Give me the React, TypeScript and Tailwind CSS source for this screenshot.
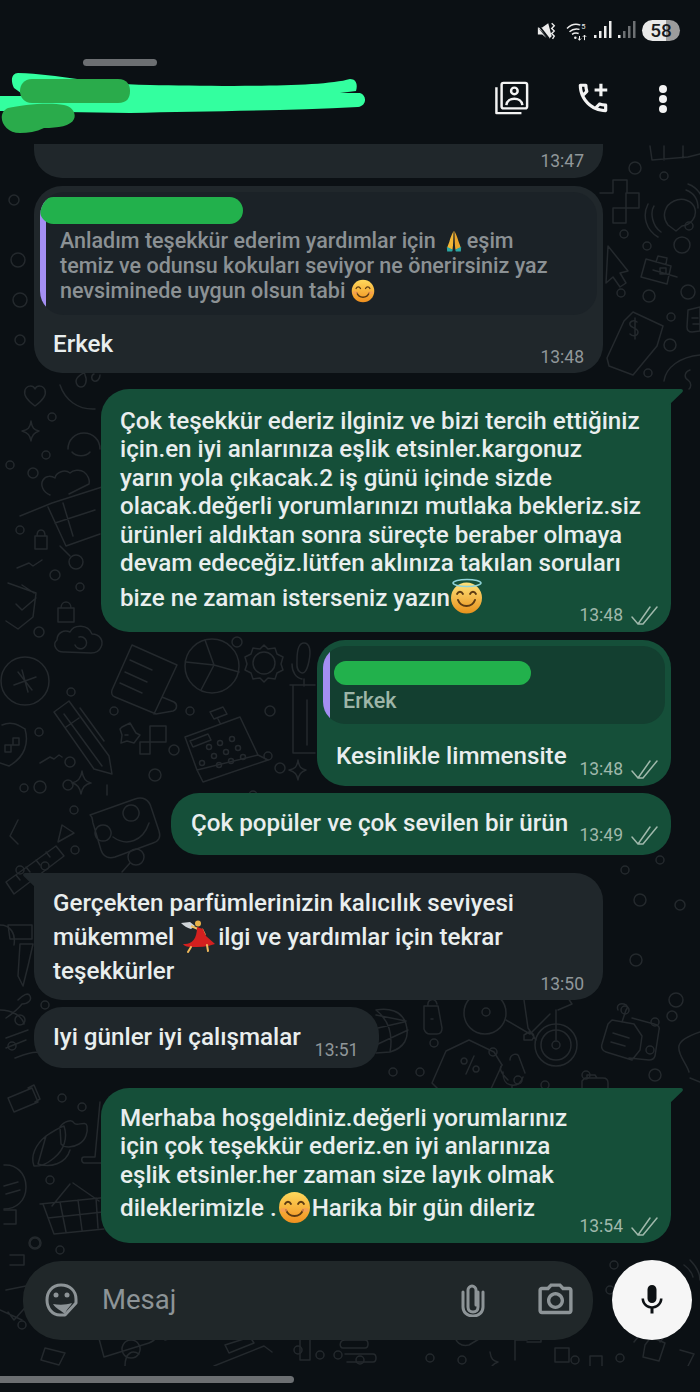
import { MdMic, MdOutlineAddIcCall, MdOutlinePhotoCamera } from "react-icons/md";

// small filler rings scattered in the wallpaper [x, y, r]
const rings = [
  [52, 160, 6], [635, 168, 6], [664, 176, 4], [624, 234, 4], [647, 246, 4], [689, 226, 4], [682, 245, 8], [621, 293, 4], [649, 296, 6], [688, 292, 7], [671, 317, 4], [670, 345, 6], [648, 373, 4],
  [14, 200, 5], [18, 260, 7], [20, 300, 7], [20, 340, 5], [52, 417, 4], [46, 455, 4], [10, 465, 4], [33, 473, 5], [20, 530, 4], [55, 575, 5], [80, 587, 4], [39, 632, 5], [71, 692, 4], [190, 711, 4], [114, 711, 4],
  [270, 711, 5], [268, 756, 4], [39, 732, 4], [70, 762, 5], [174, 750, 5], [155, 775, 6], [68, 785, 5], [40, 787, 6], [24, 788, 4], [74, 810, 4], [75, 850, 4], [45, 866, 4],
  [237, 642, 5], [280, 768, 5], [276, 835, 4], [253, 795, 4], [12, 1046, 4], [625, 870, 4], [640, 900, 6], [680, 905, 5], [660, 860, 4], [636, 960, 6], [676, 1000, 7], [625, 1010, 4], [650, 1050, 4],
  [20, 1020, 5], [45, 1005, 4], [20, 870, 4], [62, 1098, 4], [82, 1107, 4], [50, 1180, 4], [35, 1243, 5], [60, 1250, 4], [393, 1072, 4], [434, 1043, 4], [420, 1072, 4], [493, 1052, 4], [518, 1080, 4], [545, 1085, 4], [586, 1075, 4], [655, 1022, 4], [672, 1016, 5], [655, 1075, 6],
  [614, 1265, 4], [610, 1290, 4], [22, 1325, 4], [320, 1355, 4], [338, 1355, 4], [298, 1350, 4], [360, 1360, 4], [430, 1358, 4], [462, 1360, 4], [575, 1360, 4], [620, 1358, 4],
  // register keys
  [209, 747, 2.500], [220, 743, 2.500], [232, 739, 2.500], [214, 756, 2.500], [226, 752, 2.500], [238, 748, 2.500], [202, 763, 2.500], [219, 765, 2.500], [231, 761, 2.500], [243, 757, 2.500],
];

function Wallpaper() {
  return (
    <svg className="absolute inset-0 h-full w-full" viewBox="0 144 700 1222" fill="none" stroke="#24292d" strokeWidth="1.500" strokeLinecap="round" strokeLinejoin="round">
      {rings.map(([x, y, r], i) => (
        <circle key={i} cx={x} cy={y} r={r} />
      ))}
      {/* right column */}
      <path d="M650 146l2 14 36-3 12-3M664 146v14M683 146v12" />
      <path d="M613 180h14v13h12v15h-13v-15M613 180v13h-13M613 208h13v15h-13z" />
      <path d="M668 225c-7-9-3-20 6-24s19 0 21 8-4 16-13 17l-6 5zM654 206c-4 6-2 20 7 26M648 204c-6 12-2 26 10 33M686 190c8 3 12 10 12 18M688 184c8 3 14 10 16 20" />
      <path d="M608 246l20 25-8 2 6 10-6 4-7-10-7 6zM600 250v40" />
      <path d="M646 259l25 7-4 18-26-7zM656 262l2-6 9 2-1 6M653 270l24 7M660 268h6v6h-6z" />
      <path d="M633 312l30 14-6 20-24 29-24-9-2-8 17-37zM637 322c-4-3-8 0-7 3s8 3 8 7-5 5-8 2M635 318v21" />
      <path d="M700 355c-20 2-34 12-36 26M690 370c-6 2-6 8-2 10 4 3 3 7 1 9" />
      <path d="M688 310l12-3v24l-8 1c-3 0-5-2-5-5zM692 318h6M693 324h6" />
      {/* left column, heart to cart */}
      <path d="M35 406c-7-5-12-10-10-16 2-5 8-5 10-1 2-4 8-4 10 1 2 6-3 11-10 16z" />
      <path d="M31 421c1 7 3 9 8 10-5 2-7 4-8 10-1-6-3-8-9-10 6-1 8-3 9-10z" />
      <path d="M60 385c5 15 18 25 35 24M85 375c3 6 0 12-4 12s-7-6-3-10 7-5 7-2M100 375c0 4-3 7-6 6s-3-6 0-7" />
      <path d="M68 449c0-9 7-16 16-16s16 7 16 16M72 452c4 5 14 5 18 0" />
      <path d="M50 495c-7-3-10-10-7-15s9-4 12-2c1-6 10-9 15-5 3-3 10-4 14-1s6 8 5 12l-20 10M20 516l32-13 50-16M48 507l18 39 34-12M55 523l40-13M63 503l10 33" />
      <circle cx="76" cy="562" r="7" />
      <path d="M60 546l10 10M17 568l12-5 4 3 9-6M35 536h12v13h-12zM37 536c0-8 8-8 8 0" />
      <path d="M8 583l28 10-3 24-15 12-12-8M16 604l6 6 14-12M22 585l12 8" />
      <path d="M58 608h16v14H58zM61 608c0-8 10-8 10 0" />
      <path d="M65 652c-9 1-13-8-8-12 0-7 7-11 13-8 4-8 18-8 22 2 8 0 12 7 9 13-2 5-6 6-10 6zM75 645a6 6 0 1 0 4-8" />
      <circle cx="25" cy="681" r="24" />
      <path d="M14 685l22-8M22 670l6 22M18 672l14 18" />
      {/* receipt, pie, gear, mic */}
      <path d="M132 645l45 20-15 32 12 5c4 2 3 8-1 9l-17 3-41-17c-3-1-4-4-3-7zM130 660l22 10M125 672l22 10M120 683l22 10M162 697l-8 17" />
      <circle cx="212" cy="666" r="27" />
      <path d="M205 640l9 25 25 7M214 665l-13 25M186 662l28 3" />
      <circle cx="264" cy="663" r="11" />
      <path d="M264 645l4 4 7-1 2 6 6 3-2 7 2 6-6 3-2 6-7-1-4 4-4-4-7 1-2-6-6-3 2-6-2-7 6-3 2-6 7 1z" />
      <path d="M297 660c0-8 1-17 7-17s7 8 5 18-5 14-9 11-3-7-3-12zM292 664c0 8 4 14 10 15M304 679v7" />
      <path d="M290 685h25M293 685v68h22M307 700v45" />
      {/* pencil, cash register, shields */}
      <path d="M54 712l15-11 40 55 3 18-18-5zM64 714l38 52M80 708l24 33M66 727l13-9" />
      <path d="M2 725c10-4 16 0 23 4 4 14 0 28-16 37l-9-3M5 745h8v-7h6v7h-8v7H5z" />
      <path d="M122 727l8-4 6 10 4 2-6 8-7-2-6 2 1-8-2-6 2-2zM125 735h3M150 726h16v16h-16zM150 742h-10v12h10v-12" />
      <path d="M185 737l55-20 18 38 10 5-65 22-6-12zM197 770l61-15M190 741l18-7 3 6-18 7zM210 712l13-5 4 7-13 5zM218 719l2 4" />
      <path d="M298 760c1 7 3 9 8 10-5 2-7 4-8 10-1-6-3-8-9-10 6-1 8-3 9-10zM82 771c1 8 4 11 9 12-6 1-9 4-10 11-1-7-4-10-9-11 5-1 9-4 10-12z" />
      <path d="M40 763l10-6 4 2 5-4 3 2" />
      {/* robot, triangle, ruler */}
      <path d="M90 815l45-16c8-3 14 1 16 8l8 24c2 6 0 10-6 12l-38 14c-7 2-12-1-14-7l-8-27c-1-4 0-6-3-8zM103 825a8 8 0 1 0 .1 0zM131 805a8 8 0 1 0 .1 0zM113 837c14 10 30 4 36-14M107 795v-10" />
      <path d="M62 825l12 8-16 9zM6 882l50-36 8 10-50 38zM16 875l4 5M26 867l4 5M36 860l4 5M46 852l4 5" />
      <circle cx="136" cy="857" r="8" />
      <path d="M130 863l-8 9" />
      <path d="M18 820l-8 16 8 8" />
      {/* under the received block */}
      <path d="M0 925c10 0 16 8 14 20M20 944h13l-5 22-5 20-5-10zM8 925h24v14H10z" />
      <path d="M0 1010c12 0 22 6 24 14M18 1000c5-5 10-8 12-4s-2 8-8 8c-4 5-10 10-16 14M28 1030l-22 8M26 1040l-20 8M15 1058c8-3 20-8 25-5" />
      {/* globe, lock, bike, pin note */}
      <path d="M376 1010c12-2 26 0 30 14s-2 24-16 28l-14 1M376 1010c10 8 18 20 14 42M378 1028l26-6M378 1044l30-14M376 1015l30 6" />
      <path d="M424 1006h14l4 22c0 4-2 6-5 6h-7c-3 0-5-2-6-5zM428 1006c-1-7 7-9 9-2M431 1019h2" />
      <circle cx="485" cy="1013" r="21" />
      <circle cx="486" cy="1012" r="4" />
      <circle cx="556" cy="1045" r="21" />
      <circle cx="556" cy="1045" r="15" />
      <circle cx="556" cy="1045" r="4" />
      <path d="M506 1020l24 14 20-20M524 1000l4 28 8 12M556 1010v30M524 1040h8c3-4 2-7-3-8l-5 3zM558 1010l14-6-4-6" />
      <path d="M469 1040l25 12 8 13-12 26H440l-8-8 14-32zM464 1058a3 3 0 1 0 .1 0zM476 1066a3 3 0 1 0 .1 0zM466 1074l8-18" />
      <path d="M508 1080c-6-6-10-12-6-15M503 1072c0 8 2 12 8 13s10-2 12-8M510 1060c0-6 8-8 9-3l6 16M512 1085v3" />
      <path d="M612 1020l22 4 8 12-2 14-8 10-26-8c-4-1-5-5-4-8l6-20zM618 1010c-2-5 2-7 6-6s4 4 2 6l-4 12M613 1033l16 5M611 1042l14 4M632 1018l22 6c4 1 6 3 5 6l-4 26c-1 3-3 4-6 4l-20-2" />
      <path d="M585 1078h18c3 0 5 2 5 5v8h-26v-10zM587 1078v-3h8l2 3" />
      <path d="M700 1032c-12 4-20 8-21 14-2 8 8 18 10 26M690 1078l10 4" />
      {/* left, bottom */}
      <path d="M8 1098l24-10 6 14-24 10zM28 1088l6-3 6 14-5 3" />
      <path d="M34 1166c-4-10 2-22 12-30 6-4 12-8 18-10 4 12 0 24-10 32s-14 8-20 8zM46 1136l-8 28M60 1127c4-6 12-8 14-4s12-3 13 3-1 14-8 18-14 4-18 0zM38 1164c12 4 28 0 32-14" />
      <path d="M100 1102l-5 55H84c-3 0-3 5 0 6h18" />
      <path d="M4 1165c12-1 22 8 22 22s-10 22-22 22M4 1186l14-4M6 1194l14-4" />
      <path d="M40 1204l80-8M43 1204l11 30 50-5M60 1202l6 30M78 1200l4 30M96 1198l2 30M48 1218l55-6M52 1206l18-22M73 1183l26 18" />
      <circle cx="35" cy="1243" r="6" />
      <path d="M4 1210h12v14H4M10 1255h14v10H10" />
      {/* composer gutter and strip under it */}
      <path d="M690 1260c6 6 10 12 10 20M684 1265c4 3 8 8 9 12M634 1342l16-20 10 20 20-25" />
      <path d="M6 1290l20-4 6 14-18 20-6-8M45 1348l20 5-6 12-18-5zM0 1310l22 10" />
      <path d="M98 1335l45-14c6-2 12 2 14 8s-2 12-8 14l-45 14zM131 1340a9 9 0 1 0 .1 0zM165 1340l35-10M125 1366c0-14 8-16 14-12" />
      <path d="M225 1345l25-8 4 6-25 10zM214 1366l50-20 8 6M300 1320v40h10v-40zM345 1340h20c4 0 4 8 0 8h-22c-4 0-4-8 2-8zM345 1354h28c4 0 4 8 0 8h-26" />
      <path d="M455 1335c2-6 6-10 14-8l10 12-10 6c-8 2-14-3-14-10zM490 1352c1 7 3 9 8 10-5 2-7 4-8 10M515 1360v-20h12v-12h14v14h-14M555 1362v-14h14v14zM590 1366v-10h12v10" />
      <path d="M645 1345l6-8 14 6-6 18-16-4zM680 1350l14 4-6 12" />
    </svg>
  );
}

function Pray() {
  return (
    <svg className="ml-[9px] mr-[4px] inline-block h-[22px] w-[18px] align-[-4px]" viewBox="0 0 22 29">
      <path d="M10.500 1C9 4 6 11 5 15l-3 8 7 3c1-5 1-12 1.500-25z" fill="#f2b636" />
      <path d="M11.500 1c1.500 3 4.500 10 5.500 14l3 8-7 3c-1-5-1-12-1.500-25z" fill="#e9a52c" />
      <path d="M1.500 22l8 4-1 2.500H2zM20.500 22l-8 4 1 2.500H20z" fill="#2aa6a3" />
    </svg>
  );
}

function Smile({ className }: { className: string }) {
  return (
    <svg className={`inline-block ${className}`} viewBox="0 0 33 33">
      <defs>
        <linearGradient id="sm" x1="0" y1="0" x2="0" y2="1">
          <stop offset="0" stopColor="#ffd95c" />
          <stop offset="1" stopColor="#f0901f" />
        </linearGradient>
      </defs>
      <circle cx="16.500" cy="16.500" r="15.500" fill="url(#sm)" />
      <path d="M7 13c1.500-3 4.500-3 6 0M20 13c1.500-3 4.500-3 6 0" stroke="#5c3a12" strokeWidth="1.800" fill="none" strokeLinecap="round" />
      <path d="M8 19c3 8 14 8 17 0" stroke="#5c3a12" strokeWidth="2" fill="none" strokeLinecap="round" />
      <ellipse cx="6" cy="19" rx="3.500" ry="2" fill="#f59a5a" opacity=".7" />
      <ellipse cx="27" cy="19" rx="3.500" ry="2" fill="#f59a5a" opacity=".7" />
    </svg>
  );
}

function Halo() {
  return (
    <svg className="inline-block h-[36px] w-[33px] align-[-8px]" viewBox="0 0 33 36">
      <defs>
        <linearGradient id="ha" x1="0" y1="0" x2="0" y2="1">
          <stop offset="0" stopColor="#ffe27a" />
          <stop offset="1" stopColor="#e8921c" />
        </linearGradient>
      </defs>
      <circle cx="16.500" cy="20" r="15.500" fill="url(#ha)" />
      <ellipse cx="17" cy="5" rx="14" ry="3.500" fill="none" stroke="#8fd3d8" strokeWidth="1.500" />
      <path d="M7 16c1.500-3 4.500-3 6 0M20 16c1.500-3 4.500-3 6 0" stroke="#5c3a12" strokeWidth="1.800" fill="none" strokeLinecap="round" />
      <path d="M8 22c3 8 14 8 17 0" stroke="#5c3a12" strokeWidth="2" fill="none" strokeLinecap="round" />
    </svg>
  );
}

function Dancer() {
  return (
    <svg className="ml-[7px] mr-[2px] inline-block h-[33px] w-[35px] align-[-8px]" viewBox="0 0 35 33">
      <path d="M0 3l9-1 5 4-4 3C6 8 3 6 0 3z" fill="#cfd4d8" />
      <path d="M10 6l7 3M21 9l3 6" stroke="#f0c060" strokeWidth="2" fill="none" />
      <circle cx="17" cy="3.500" r="3" fill="#e8b24a" />
      <path d="M16 7l6 2 3 7 9 8c-8 3-16 3-24 3-4 0-7-1-8-3 8 1 14-4 14-17z" fill="#d3201f" />
      <path d="M10 27l-3 5M26 25l1 6" stroke="#efb95c" strokeWidth="2" fill="none" strokeLinecap="round" />
    </svg>
  );
}

function DoubleCheck() {
  return (
    <svg width="27" height="19" viewBox="0 0 27 19" fill="none" stroke="currentColor" strokeWidth="1.500" strokeLinecap="round" strokeLinejoin="round">
      <path d="M1 11l6 7L19 1M12 18L26 1M7 18h5" />
    </svg>
  );
}

// time label sitting at the bubble's lower right
function Meta({ time, sent, className }: { time: string; sent?: boolean; className: string }) {
  return (
    <div className={`flex h-[24px] items-center justify-end gap-[8px] text-[17.500px] font-normal leading-[24px] ${sent ? "pr-[13px] text-[#9fb8ab]" : "pr-[19px] text-[#90979a]"} ${className}`}>
      <span>{time}</span>
      {sent && <DoubleCheck />}
    </div>
  );
}

function Tail({ side }: { side: "left" | "right" }) {
  return side === "left" ? (
    <svg className="absolute left-[-11px] top-0" width="14" height="16" viewBox="0 0 14 16">
      <path d="M14 0H2C0 0-.5 2 1 3.500L14 16z" fill="#20272b" />
    </svg>
  ) : (
    <svg className="absolute right-[-12px] top-0" width="14" height="16" viewBox="0 0 14 16">
      <path d="M0 0h12c2 0 2.500 2 1 3.500L0 16z" fill="#154f39" />
    </svg>
  );
}

export default function App() {
  return (
    <div className="flex h-[1392px] w-[700px] flex-col overflow-hidden bg-[#0b1014] font-['Roboto',sans-serif] text-[#e9eeee]">
      {/* status bar + app bar */}
      <header className="relative h-[144px] shrink-0">
        <div className="flex h-[59px] items-start justify-end pr-[20px] pt-[21px]">
          <svg width="19" height="20" viewBox="0 0 22 22" fill="#ececec">
            <path d="M1 7h5l7-5 4 15-3 3L1 7zM1 7v8h5l5 4z" />
            <path d="M0 2l14 18" stroke="#0b1014" strokeWidth="2" />
            <path d="M17 2l3 3-3 3 3 3-3 3 3 3-2 3" stroke="#ececec" strokeWidth="1.600" fill="none" />
          </svg>
          <svg width="24" height="20" viewBox="0 0 26 24" fill="none" stroke="#ececec" strokeWidth="1.700" className="ml-[9px]">
            <path d="M1 9c5-5 11-6 16-4M4 13c4-4 8-4 12-3M7 16c3-2 5-2 8-1" />
            <circle cx="11" cy="20" r="1.500" fill="#ececec" stroke="none" />
            <path d="M16 18v5M14 21l2 2 2-2M22 23v-6M20 19l2-2 2 2" strokeWidth="1.200" />
            <text x="18" y="9" fontSize="9" fill="#ececec" stroke="none" fontFamily="Roboto, sans-serif">5</text>
          </svg>
          <svg width="18" height="18" viewBox="0 0 18 18" fill="#ececec" className="ml-[5px]">
            <rect x="0" y="14" width="2.500" height="3" />
            <rect x="5" y="10" width="2.500" height="7" />
            <rect x="10" y="5" width="2.500" height="12" />
            <rect x="15" y="0" width="2.500" height="17" />
          </svg>
          <svg width="18" height="18" viewBox="0 0 18 18" fill="#6d7073" className="ml-[6px]">
            <rect x="0" y="14" width="2.500" height="3" fill="#ececec" />
            <rect x="5" y="10" width="2.500" height="7" />
            <rect x="10" y="5" width="2.500" height="12" />
            <rect x="15" y="0" width="2.500" height="17" />
          </svg>
          <div className="ml-[6px] -mt-[1px] flex h-[21px] w-[38px] items-center justify-center rounded-full bg-[linear-gradient(90deg,#e8e8e8_63%,#9c9c9c_63%)] text-[19px] font-medium leading-none text-[#17191b]">58</div>
        </div>
        <div className="ml-[83px] h-[7px] w-[74px] rounded-full bg-[#6c6f72]" />
        <div className="mt-[15px] flex items-start justify-end pr-[33px]">
          <svg width="34" height="34" viewBox="0 0 36 35" fill="none" stroke="#f3f3f3" strokeWidth="2.600" strokeLinejoin="round">
            <rect x="7" y="1.500" width="27" height="27" rx="2" />
            <path d="M1.500 6v27.500H28" />
            <circle cx="20.500" cy="10" r="3.500" />
            <path d="M12 25c1-9 16-9 17 0" />
          </svg>
          <MdOutlineAddIcCall size={38} color="#f3f3f3" className="ml-[45px] -mt-[2px]" />
          <div className="ml-[47px] mt-[4px] flex flex-col gap-[2px]">
            <span className="h-[8px] w-[8px] rounded-full bg-[#f3f3f3]" />
            <span className="h-[8px] w-[8px] rounded-full bg-[#f3f3f3]" />
            <span className="h-[8px] w-[8px] rounded-full bg-[#f3f3f3]" />
          </div>
        </div>
        {/* name covered with marker in the original */}
        <svg className="absolute left-0 top-[70px]" width="370" height="66" viewBox="0 0 370 66">
          <path d="M18 3C60 4 90 14 150 15s170 3 200-6c6 0 8 5 6 12l-16 2 20 0c7 2 7 13-2 14-78 4-158 4-228 6L0 41V26h25l-11-8C10 10 12 3 18 3z" fill="#33ff9f" />
          <path d="M32 9h86c9 0 12 6 12 12 0 7-3 12-12 12H32c-8 0-12-6-12-12 0-6 4-12 12-12z" fill="#2aab4b" />
          <path d="M8 38c14-3 40-6 56-3 10 2 12 10 10 14-3 7-16 9-30 9-8 4-16 5-24 5C2 63-4 43 8 38z" fill="#2aab4b" />
        </svg>
      </header>

      {/* conversation on wallpaper */}
      <main className="relative flex h-[1222px] shrink-0 flex-col">
        <Wallpaper />
        <div className="relative flex flex-col">
          <section className="ml-[34px] h-[34px] w-[569px] rounded-b-[28px] bg-[#20272b]">
            <Meta time="13:47" className="pt-[9px]" />
          </section>

          <section className="ml-[34px] mt-[8px] h-[187px] w-[569px] rounded-[28px] bg-[#20272b] p-[6px]">
            <div className="h-[123px] w-[557px] overflow-hidden rounded-[24px] bg-[#1b2227]">
              <div className="h-[123px] border-l-[6px] border-[#a48ff2] pl-[14px] pt-[5px]">
                <div className="-ml-[20px] mb-[4px] h-[27px] w-[203px] rounded-full bg-[#22b14c]" />
                <div className="text-[21.500px] font-medium leading-[25px] text-[#8b9194]">
                  <div className="h-[25px] whitespace-nowrap">Anladım teşekkür ederim yardımlar için<Pray />eşim</div>
                  <div className="h-[25px] whitespace-nowrap">temiz ve odunsu kokuları seviyor ne önerirsiniz yaz</div>
                  <div className="h-[25px] whitespace-nowrap">nevsiminede uygun olsun tabi <Smile className="h-[24px] w-[24px] align-[-5px]" /></div>
                </div>
              </div>
            </div>
            <div className="pl-[13px] pt-[13px] text-[24.200px] font-medium leading-[32px]">Erkek</div>
            <Meta time="13:48" className="-mt-[15px] -mr-[6px]" />
          </section>

          <section className="relative ml-[101px] mt-[16px] h-[243px] w-[570px] rounded-[28px] rounded-tr-none bg-[#154f39] pl-[19px] pt-[18px] text-[24.200px] font-medium leading-[28.400px]">
            <Tail side="right" />
            <div className="whitespace-nowrap">Çok teşekkür ederiz ilginiz ve bizi tercih ettiğiniz</div>
            <div className="whitespace-nowrap">için.en iyi anlarınıza eşlik etsinler.kargonuz</div>
            <div className="whitespace-nowrap">yarın yola çıkacak.2 iş günü içinde sizde</div>
            <div className="whitespace-nowrap">olacak.değerli yorumlarınızı mutlaka bekleriz.siz</div>
            <div className="whitespace-nowrap">ürünleri aldıktan sonra süreçte beraber olmaya</div>
            <div className="whitespace-nowrap">devam edeceğiz.lütfen aklınıza takılan soruları</div>
            <div className="mt-[1px] h-[34px] whitespace-nowrap leading-[34px]">bize ne zaman isterseniz yazın<Halo /></div>
            <Meta sent time="13:48" className="-mt-[9px]" />
          </section>

          <section className="ml-[317px] mt-[8px] h-[146px] w-[354px] rounded-[28px] bg-[#154f39] p-[6px]">
            <div className="h-[78px] w-[342px] overflow-hidden rounded-[22px] bg-[#133f30]">
              <div className="h-[78px] border-l-[7px] border-[#a48ff2] pl-[4px] pt-[15px]">
                <div className="h-[24px] w-[197px] rounded-full bg-[#22b14c]" />
                <div className="pl-[9px] pt-[3px] text-[21.500px] font-medium leading-[26px] text-[#9db5a8]">Erkek</div>
              </div>
            </div>
            <div className="pl-[13px] pt-[16px] text-[24.200px] font-medium leading-[32px]">Kesinlikle limmensite</div>
            <Meta sent time="13:48" className="-mt-[15px] -mr-[6px]" />
          </section>

          <section className="ml-[171px] mt-[7px] h-[62px] w-[500px] rounded-[28px] bg-[#154f39] pl-[20px] pt-[14px] text-[24.200px] font-medium leading-[32px]">
            <div className="whitespace-nowrap">Çok popüler ve çok sevilen bir ürün</div>
            <Meta sent time="13:49" className="-mt-[16px]" />
          </section>

          <section className="relative ml-[34px] mt-[18px] h-[127px] w-[569px] rounded-[28px] rounded-tl-none bg-[#20272b] pl-[19px] pt-[13px] text-[24.200px] font-medium leading-[34px]">
            <Tail side="left" />
            <div className="whitespace-nowrap">Gerçekten parfümlerinizin kalıcılık seviyesi</div>
            <div className="h-[34px] whitespace-nowrap">mükemmel<Dancer />ilgi ve yardımlar için tekrar</div>
            <div className="whitespace-nowrap">teşekkürler</div>
            <Meta time="13:50" className="-mt-[16px]" />
          </section>

          <section className="ml-[34px] mt-[7px] flex h-[61px] w-[345px] rounded-[28px] bg-[#20272b] pl-[19px] pt-[14px] text-[24.200px] font-medium leading-[32px]">
            <div className="whitespace-nowrap">Iyi günler iyi çalışmalar</div>
            <Meta time="13:51" className="mt-[17px] ml-[14px]" />
          </section>

          <section className="relative ml-[101px] mt-[20px] h-[155px] w-[570px] rounded-[28px] rounded-tr-none bg-[#154f39] pl-[19px] pt-[16px] text-[24.200px] font-medium leading-[28.400px]">
            <Tail side="right" />
            <div className="whitespace-nowrap">Merhaba hoşgeldiniz.değerli yorumlarınız</div>
            <div className="whitespace-nowrap">için çok teşekkür ederiz.en iyi anlarınıza</div>
            <div className="whitespace-nowrap">eşlik etsinler.her zaman size layık olmak</div>
            <div className="mt-[2px] h-[34px] whitespace-nowrap leading-[34px]">dileklerimizle .<Smile className="mx-[1px] h-[33px] w-[33px] align-[-8px]" />Harika bir gün dileriz</div>
            <Meta sent time="13:54" className="-mt-[11px]" />
          </section>

          {/* composer */}
          <div className="mt-[17px] flex items-center pl-[23px] pr-[8px]">
            <div className="flex h-[79px] w-[570px] items-center rounded-[38px] bg-[#202729] pl-[22px] pr-[21px] text-[#8d9497]">
              <svg width="33" height="34" viewBox="0 0 33 34" fill="none" stroke="currentColor" strokeWidth="3" strokeLinejoin="round" strokeLinecap="round">
                <path d="M16 2c9 0 15 6 15 14v4L20 32h-5C7 32 2 25 2 17S7 2 16 2z" />
                <path d="M8 21c6 1 13 1 19-1-1 3-5 5-7 11-3-3-9-5-12-10z" fill="currentColor" stroke="none" />
                <circle cx="11" cy="12" r="2.500" fill="currentColor" stroke="none" />
                <circle cx="22" cy="12" r="2.500" fill="currentColor" stroke="none" />
              </svg>
              <span className="ml-[24px] text-[27.500px] font-normal leading-none">Mesaj</span>
              <svg className="ml-auto" width="24" height="34" viewBox="0 0 24 34" fill="none" stroke="currentColor" strokeWidth="3" strokeLinecap="round">
                <path d="M17 9v15c0 3-2 5-5 5s-5-2-5-5V7c0-2 2-4 4-4s4 2 4 4v15M22 9v15c0 5-4 9-10 9S2 29 2 24V9" />
              </svg>
              <MdOutlinePhotoCamera size={41} className="ml-[50px] -mr-[4px]" />
            </div>
            <div className="ml-[19px] flex h-[80px] w-[80px] items-center justify-center rounded-full bg-[#f6f6f6]">
              <MdMic size={36} color="#0d1114" />
            </div>
          </div>
        </div>
      </main>

      {/* gesture bar */}
      <div className="mt-[10px] h-[7px] w-[294px] rounded-r-full bg-[#6c6f72]" />
    </div>
  );
}
